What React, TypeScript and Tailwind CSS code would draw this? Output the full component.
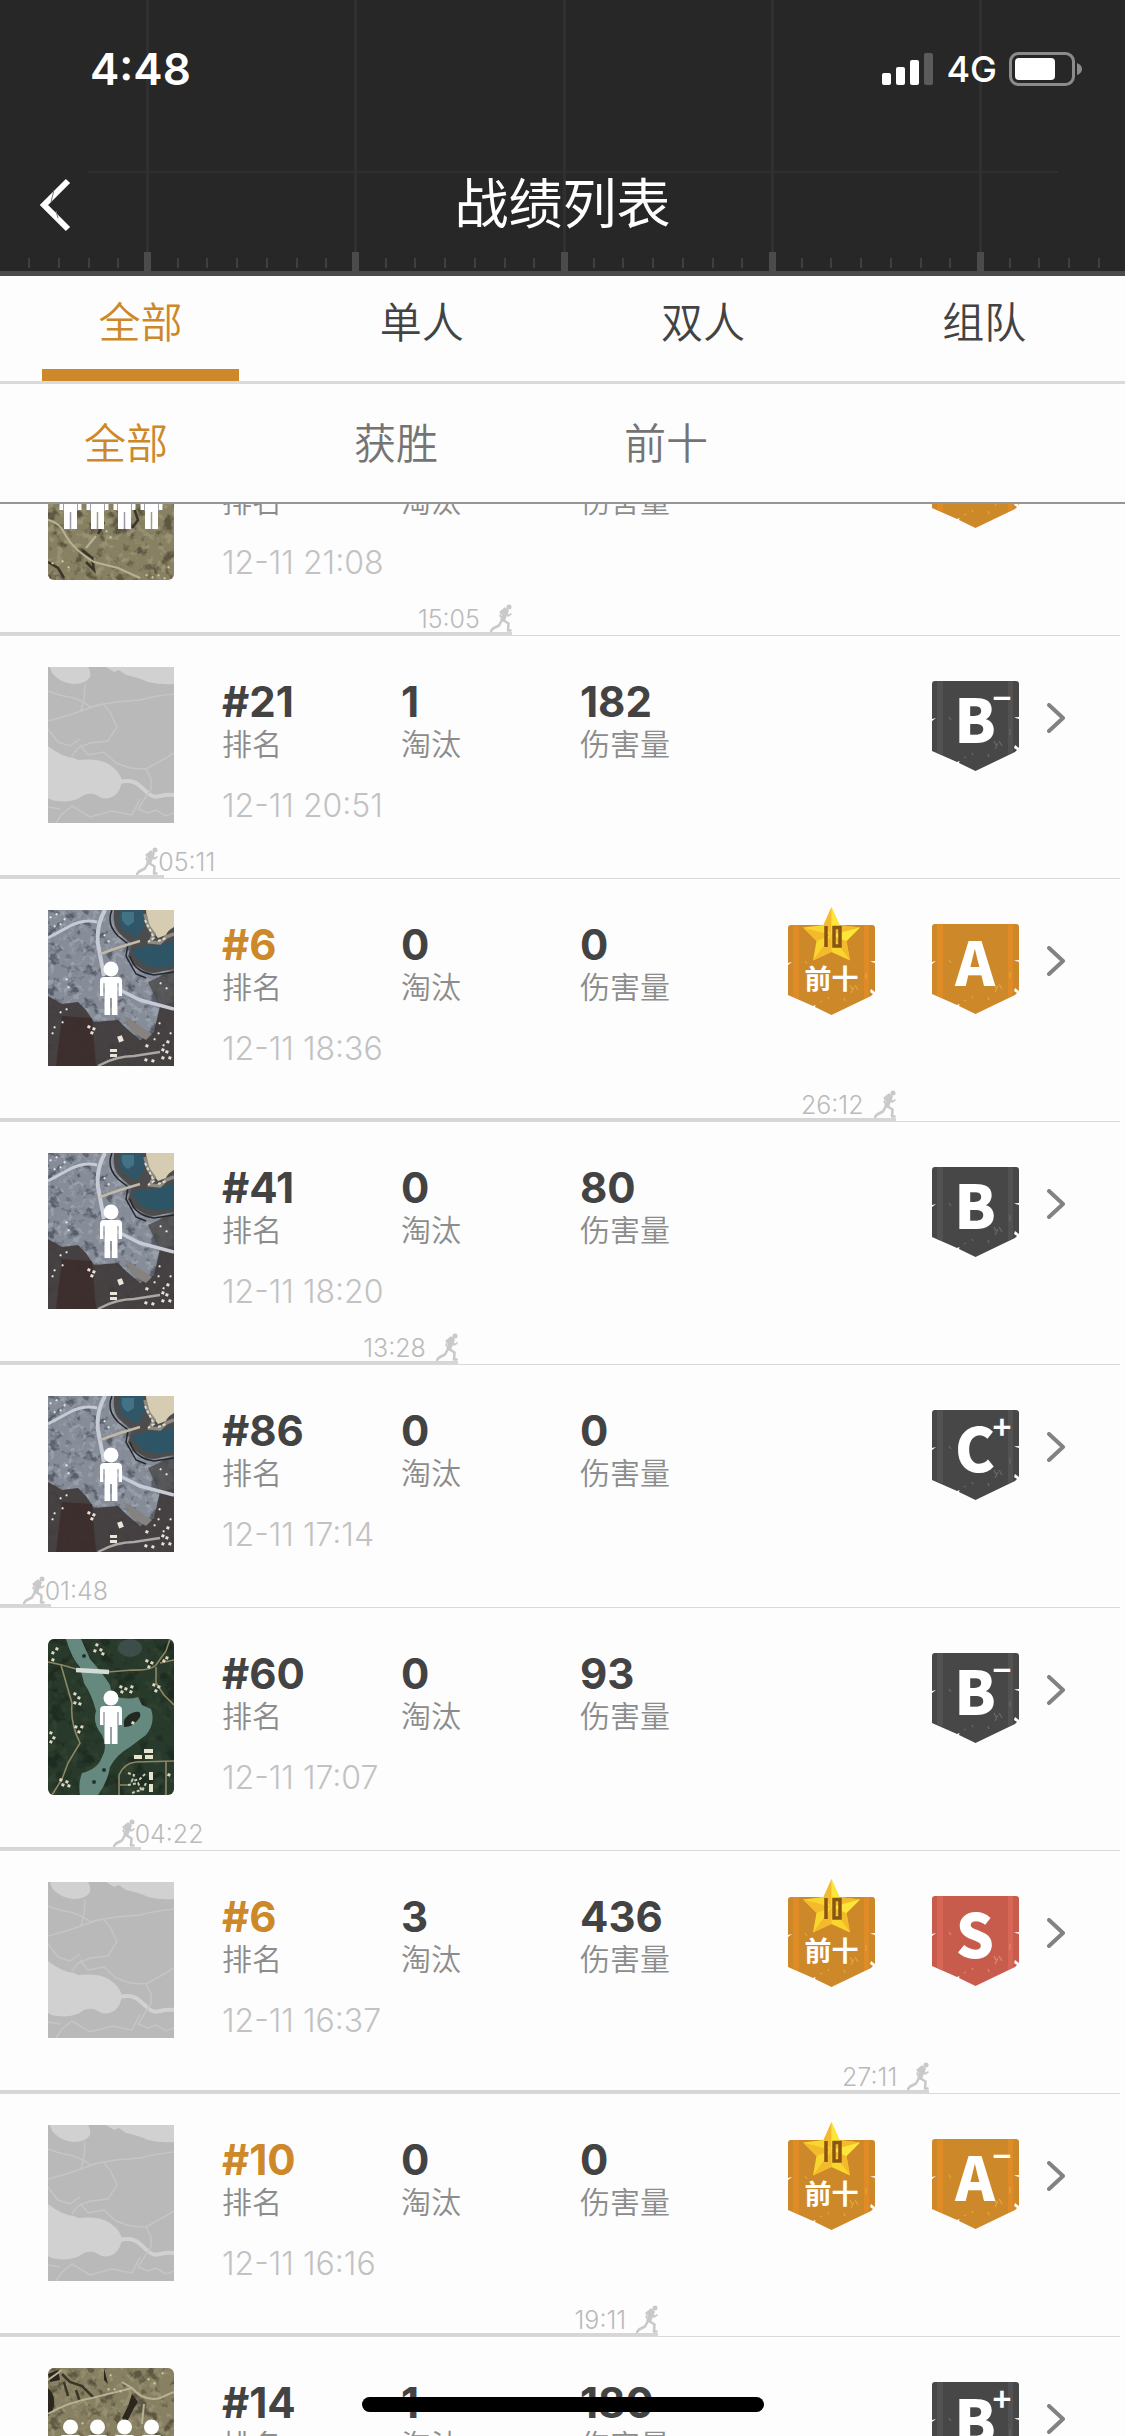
import React from "react";

type MapKind = "desert" | "grey" | "snow" | "green";
type Tone = "dark" | "gold" | "red";

interface Match {
  rank?: string;
  kills?: string;
  damage?: string;
  date: string;
  map: MapKind;
  grade?: string;
  sign?: "+" | "−";
  tone: Tone;
  topTen?: boolean;
  time?: string;
  /** survival progress, percent of the row width */
  progress?: number;
  /** the time sits behind the runner when the bar is short */
  timeAfter?: boolean;
}

const matches: Match[] = [
  { date: "12-11 21:08", map: "desert", tone: "gold", time: "15:05", progress: 45.5 },
  { rank: "#21", kills: "1", damage: "182", date: "12-11 20:51", map: "grey", grade: "B", sign: "−", tone: "dark", time: "05:11", progress: 14.6, timeAfter: true },
  { rank: "#6", kills: "0", damage: "0", date: "12-11 18:36", map: "snow", grade: "A", tone: "gold", topTen: true, time: "26:12", progress: 79.6 },
  { rank: "#41", kills: "0", damage: "80", date: "12-11 18:20", map: "snow", grade: "B", tone: "dark", time: "13:28", progress: 40.7 },
  { rank: "#86", kills: "0", damage: "0", date: "12-11 17:14", map: "snow", grade: "C", sign: "+", tone: "dark", time: "01:48", progress: 4.5, timeAfter: true },
  { rank: "#60", kills: "0", damage: "93", date: "12-11 17:07", map: "green", grade: "B", sign: "−", tone: "dark", time: "04:22", progress: 12.5, timeAfter: true },
  { rank: "#6", kills: "3", damage: "436", date: "12-11 16:37", map: "grey", grade: "S", tone: "red", topTen: true, time: "27:11", progress: 82.6 },
  { rank: "#10", kills: "0", damage: "0", date: "12-11 16:16", map: "grey", grade: "A", sign: "−", tone: "gold", topTen: true, time: "19:11", progress: 58.5 },
  { rank: "#14", kills: "1", damage: "180", date: "", map: "desert", grade: "B", sign: "+", tone: "dark" },
];

function HeaderBackdrop() {
  const majors = [147, 355, 564, 772, 980];
  const minors: number[] = [];
  for (let start = -61; start < 1125; start += 208) {
    for (let i = 1; i < 7; i++) minors.push(Math.round(start + i * 29.7));
  }
  return (
    <svg className="absolute inset-0 h-full w-full" viewBox="0 0 1125 276" preserveAspectRatio="none" aria-hidden="true">
      <rect width="1125" height="276" fill="#272727" />
      <rect x="88" y="171" width="970" height="2" fill="#2f2f2f" />
      {majors.map((x) => (
        <g key={x}>
          <rect x={x - 1} width="3" height="252" fill="#303030" />
          <rect x={x - 3} y="252" width="7" height="20" fill="#4b4b4b" />
        </g>
      ))}
      {minors.map((x) => (
        <rect key={x} x={x} y="258" width="2" height="10" fill="#3f3f3f" />
      ))}
      <rect y="271" width="1125" height="5" fill="#4a4a4a" />
    </svg>
  );
}

function Person({ x }: { x: number }) {
  return (
    <g transform={`translate(${x} 0)`} fill="#fff">
      <circle cx="0" cy="59" r="7.5" />
      <path d="M-7 67H7Q11 67 11 71V86H7.5V73H6.5V105H.7V88H-.7V105H-6.5V73H-7.5V86H-11V71Q-11 67-7 67Z" />
      <path d="M-7 74V87M7 74V87" stroke="#aab" strokeWidth="0.8" />
      <path d="M0 88V105" stroke="#99a" strokeWidth="1" />
    </g>
  );
}

function Grain({ id, freq, dark, light }: { id: string; freq: number; dark: string; light: string }) {
  return (
    <>
      <filter id={id + "d"} x="0" y="0" width="100%" height="100%">
        <feTurbulence type="fractalNoise" baseFrequency={freq} numOctaves="4" seed="7" />
        <feColorMatrix values="0 0 0 0 0  0 0 0 0 0  0 0 0 0 0  6 0 0 0 -3.2" result="n" />
        <feFlood floodColor={dark} />
        <feComposite in2="n" operator="in" />
      </filter>
      <filter id={id + "l"} x="0" y="0" width="100%" height="100%">
        <feTurbulence type="fractalNoise" baseFrequency={freq * 1.6} numOctaves="3" seed="21" />
        <feColorMatrix values="0 0 0 0 0  0 0 0 0 0  0 0 0 0 0  0 6 0 0 -3.2" result="n" />
        <feFlood floodColor={light} />
        <feComposite in2="n" operator="in" />
      </filter>
    </>
  );
}

function Dots({ points, size = 3, fill = "#ded8c4" }: { points: number[][]; size?: number; fill?: string }) {
  return (
    <g fill={fill}>
      {points.map(([x, y], i) => (
        <rect key={i} x={x} y={y} width={size} height={size} transform={`rotate(20 ${x} ${y})`} />
      ))}
    </g>
  );
}

function GreyMap() {
  return (
    <>
      <rect width="126" height="156" fill="#b9b9b9" />
      <g fill="#d1d1d1">
        <path d="M2 0H40Q43 5 42 10Q38 17 26 17Q12 16 4 6Z" />
        <path d="M58 0L66 5L71 3L78 8Q92 11 100 15Q112 18 126 17V0Z" />
        <path d="M0 79Q14 90 26 91L30 93Q52 91 62 98Q71 104 74 113Q73 124 66 129Q57 134 50 129Q44 125 36 128Q26 136 10 134Q4 134 0 131Z" />
      </g>
      <path d="M72 115Q84 112 92 119L101 127Q106 131 112 129Q120 127 126 128" fill="none" stroke="#d1d1d1" strokeWidth="4" />
      <g fill="none" stroke="#c5c5c5" strokeWidth="1.5">
        <path d="M0 24Q12 29 22 30Q36 34 42 40Q54 37 68 35L92 33Q106 29 126 27" />
        <path d="M37 17L36 32L33 44M56 38L62 45L69 60L65 66L60 74L42 76L30 81L24 89" />
        <path d="M0 54L18 49L30 45L50 38M0 62L10 75L22 79L32 72M32 78L40 88L56 85L68 96L82 101L98 102L116 92L126 86" />
        <path d="M98 102L103 112L103 122L90 142L100 146L108 143L118 149L126 146" />
        <path d="M8 156L14 147L24 139L42 150L64 144L84 148L92 132M0 140L12 142" />
      </g>
    </>
  );
}

function SnowMap({ id }: { id: string }) {
  return (
    <>
      <Grain id={id} freq={0.09} dark="#4a4f5a" light="#a9b1bc" />
      <rect width="126" height="156" fill="#868d98" />
      <rect width="126" height="156" filter={`url(#${id}d)`} opacity="0.75" />
      <rect width="126" height="156" filter={`url(#${id}l)`} opacity="0.55" />
      <path d="M0 86L14 94L30 92L38 100L46 112L70 110L78 118L92 130L106 122L112 96L126 92V156H0Z" fill="#403a39" opacity="0.92" />
      <path d="M100 72L126 60V96L112 98Z" fill="#4a4849" opacity="0.8" />
      <path d="M14 106L44 108L48 156H8Z" fill="#3c2b2a" opacity="0.8" />
      <path d="M76 106L86 112L104 124L98 130L84 122Z" fill="#85827f" />
      <path d="M66 0Q64 16 72 24L84 34L80 46Q88 60 106 63L126 59V0Z" fill="#4c4c4d" />
      <path d="M72 0Q68 14 78 22L90 28L97 14L95 0Z" fill="#315668" />
      <path d="M74 2Q72 12 80 16L86 12L86 2Z" fill="#447285" />
      <path d="M84 40Q90 54 104 57Q116 58 126 55V30L112 35L92 37Z" fill="#2d5566" />
      <path d="M98 0H126V17Q120 20 118 25L110 28L104 20L99 10Z" fill="#d6ccb1" />
      <path d="M97 4L100 16L106 24L102 32L112 33L118 27L126 24" fill="none" stroke="#8f8b80" strokeWidth="3.5" />
      <path d="M97 10L102 20L106 28L100 32M110 31L118 28" fill="none" stroke="#dedbce" strokeWidth="2" strokeDasharray="3 2" />
      <path d="M82 46Q86 62 106 65L126 62M64 0Q58 14 70 26L80 34L78 46L88 64L98 68" fill="none" stroke="#26272c" strokeWidth="1.5" />
      <g fill="none" stroke="#c6cbd6">
        <path d="M0 28L22 16Q36 9 49 12" strokeWidth="3" />
        <path d="M57 0Q48 16 50 34L56 66" strokeWidth="4" />
        <path d="M52 44L72 37L92 31" strokeWidth="2.5" stroke="#c3b9a8" />
        <path d="M68 78L92 90L126 99" strokeWidth="3.5" />
        <path d="M50 156Q68 146 86 146L112 142" strokeWidth="2.5" stroke="#aaa7a4" />
      </g>
      <Dots size={2} fill="#e6e6e1" points={[[2, 6], [8, 3], [12, 13], [6, 15], [16, 8], [56, 24], [60, 30], [18, 68], [20, 76], [12, 101], [18, 98], [6, 116], [4, 122], [14, 111], [111, 112], [110, 122], [106, 128], [115, 134], [118, 77], [112, 72], [122, 122]]} />
      <Dots fill="#e6e2d8" points={[[40, 115], [45, 117], [43, 121], [98, 134], [114, 138], [119, 130], [114, 146], [121, 146], [97, 148], [104, 149], [118, 140]]} />
      <g fill="#e8e5db">
        <rect x="70" y="126" width="5" height="6" transform="rotate(-20 72 129)" />
        <rect x="62" y="139" width="7" height="3" />
        <rect x="62" y="144" width="7" height="3" />
      </g>
      <Person x={63} />
    </>
  );
}

function GreenMap({ id }: { id: string }) {
  return (
    <>
      <Grain id={id} freq={0.06} dark="#17241b" light="#3c4a36" />
      <rect width="126" height="156" fill="#283a2b" />
      <rect width="126" height="156" filter={`url(#${id}d)`} opacity="0.6" />
      <rect width="126" height="156" filter={`url(#${id}l)`} opacity="0.45" />
      <ellipse cx="82" cy="9" rx="12" ry="9" fill="#46565a" opacity="0.7" />
      <path d="M18 0H33L42 20Q56 36 62 46L64 56Q78 62 90 58L94 66L103 70Q108 84 98 96L82 108Q68 116 62 128Q60 142 50 156H32Q30 144 34 134Q50 130 54 118Q60 108 54 96Q44 84 48 72Q44 56 36 44L32 28Q24 20 18 0Z" fill="#66897f" />
      <path d="M76 88Q74 78 84 74Q94 70 92 78Q86 88 76 88Z" fill="#20281f" />
      <g fill="#233430">
        <circle cx="36" cy="17" r="2" />
        <circle cx="56" cy="131" r="2" />
        <circle cx="46" cy="143" r="2" />
      </g>
      <g fill="none" stroke="#8f8764" strokeWidth="1.6">
        <path d="M0 23L14 26L28 30M60 33L84 31Q102 32 108 26L118 12L122 0" />
        <path d="M13 26Q18 44 24 64Q22 84 32 104L20 124L14 140L4 156" />
        <path d="M108 28V44L116 56L126 66M112 24L126 21" />
        <path d="M71 156V136Q76 124 88 123L126 122M118 123V156M72 146H80" />
      </g>
      <path d="M28 31L61 33" stroke="#d5dcd8" strokeWidth="4.5" />
      <Dots points={[[4, 12], [8, 8], [4, 19], [48, 4], [52, 9], [46, 10], [54, 13], [98, 20], [103, 22], [100, 26], [115, 20], [118, 17], [72, 46], [77, 48], [83, 46], [73, 51], [82, 51], [105, 44], [110, 46], [107, 50], [26, 53], [30, 57], [26, 62], [31, 63], [27, 86], [33, 86], [30, 91], [2, 92], [5, 97], [2, 101], [12, 139], [18, 141], [14, 144], [20, 145], [84, 82], [120, 134]]} />
      <g fill="#e6e3cf">
        <rect x="96" y="110" width="9" height="4" />
        <rect x="86" y="116" width="8" height="4" />
        <rect x="97" y="116" width="8" height="4" />
        <rect x="101" y="133" width="4" height="8" />
        <rect x="101" y="145" width="4" height="8" />
      </g>
      <path d="M80 134L86 136L84 142L92 140L98 134M80 146L90 144L94 152L98 144M84 154L96 150" fill="none" stroke="#c9cbb4" strokeWidth="2" strokeDasharray="3 2" />
      <Person x={63} />
    </>
  );
}

function DesertMap({ id }: { id: string }) {
  return (
    <>
      <Grain id={id} freq={0.08} dark="#4b4634" light="#a9a384" />
      <rect width="126" height="156" fill="#878062" />
      <rect width="126" height="156" filter={`url(#${id}d)`} opacity="0.7" />
      <rect width="126" height="156" filter={`url(#${id}l)`} opacity="0.5" />
      <path d="M0 6L10 2L12 12L2 14ZM0 20Q10 30 4 44L0 48ZM56 0L60 16L56 12ZM84 26L90 34L86 40L78 56L74 50L80 38Z" fill="#2b271f" />
      <path d="M14 6L22 14L34 18L46 30M16 14L20 28M28 22L32 34M56 98L50 110M86 84L90 96L84 104M34 126L44 134L46 146L38 138M0 138L10 144L16 154" fill="none" stroke="#3a3528" strokeWidth="2.5" />
      <g fill="none" stroke="#b8b193" strokeWidth="2">
        <path d="M0 46Q20 34 44 30L84 20Q96 34 112 30L126 24M84 20L74 14M0 12L14 2M96 36L94 56" />
        <path d="M0 96Q12 98 18 112Q26 126 46 138L70 144L92 154M38 124L48 112" />
      </g>
      <Dots fill="#cfc8a6" size={2} points={[[100, 10], [106, 14], [114, 4], [60, 20], [66, 20], [72, 22], [62, 6], [34, 54], [98, 150], [104, 152], [110, 150], [116, 153], [4, 138], [14, 136], [20, 142], [120, 142], [58, 106], [62, 112]]} />
      {[22.5, 49.5, 76.5, 103.5].map((x) => (
        <Person key={x} x={x} />
      ))}
    </>
  );
}

function MapThumb({ kind, id }: { kind: MapKind; id: string }) {
  const rounded = kind === "desert" || kind === "green";
  return (
    <svg className={rounded ? "h-[156px] w-[126px] shrink-0 rounded-md" : "h-[156px] w-[126px] shrink-0"} viewBox="0 0 126 156" aria-hidden="true">
      {kind === "grey" && <GreyMap />}
      {kind === "snow" && <SnowMap id={id} />}
      {kind === "green" && <GreenMap id={id} />}
      {kind === "desert" && <DesertMap id={id} />}
    </svg>
  );
}

const tones: Record<Tone, { base: string; stripe: string; scratch: string }> = {
  dark: { base: "#474747", stripe: "#555555", scratch: "#676767" },
  gold: { base: "#cd8829", stripe: "#e58d25", scratch: "#dfa63c" },
  red: { base: "#c85c4c", stripe: "#dc6a5a", scratch: "#dc8476" },
};

function ShieldBody({ tone }: { tone: Tone }) {
  const t = tones[tone];
  return (
    <>
      <path d="M3 0H84Q87 0 87 3V36L82 36.500L87 38V67L83 64L82 67L85 69L83 71L43.500 90L27 82L27.500 80L25 81L0 70V40L4 37L0 38V3Q0 0 3 0Z" fill={t.base} />
      <path d="M5 0H11V74L5 72ZM76 0H81V71L76 74Z" fill={t.stripe} opacity="0.75" />
      <path d="M17 36L19 39M63 68L66 62M67 60L70 65M62 60L64 64M56 73L57 76M78 48V54M40 72L41 74M32 77L34 76" stroke={t.scratch} strokeWidth="1.300" fill="none" />
    </>
  );
}

function Grade({ letter, sign, tone }: { letter?: string; sign?: string; tone: Tone }) {
  return (
    <svg className="h-[90px] w-[87px] shrink-0 font-['Noto_Sans_CJK_SC',sans-serif] font-black" viewBox="0 0 87 90">
      <ShieldBody tone={tone} />
      <text x="43" y="62" textAnchor="middle" fontSize="60" fill="#fff">{letter}</text>
      {sign && (
        <text x="70" y={29} textAnchor="middle" fontSize="32" fontWeight="700" fill="#fff">{sign}</text>
      )}
    </svg>
  );
}

function TopTen() {
  return (
    <svg className="h-[108px] w-[87px] shrink-0 font-['Noto_Sans_CJK_SC',sans-serif]" viewBox="0 0 87 108">
      <g transform="translate(0 18)">
        <ShieldBody tone="gold" />
      </g>
      <path d="M43.500 0L51.500 18L72 20.500L58.500 34L62 53.500L43.500 45L25 53.500L28.500 34L15 20.500L35.500 18Z" fill="#f8d62e" />
      <path d="M43.500 0L35.500 18L43.500 28ZM72 20.500L51.500 18L43.500 28ZM62 53.500L58.500 34L43.500 28ZM25 53.500L43.500 45V28ZM15 20.500L28.500 34L43.500 28Z" fill="#f1b02c" opacity="0.75" />
      <path d="M43.500 0L51.500 18L43.500 28ZM58.500 34L72 20.500L43.500 28Z" fill="#ffe83c" opacity="0.8" />
      <path d="M38 19V40M46 20.500H52V39H46Z" fill="none" stroke="#8a5514" strokeWidth="3.500" />
      <text x="43.500" y="82" textAnchor="middle" fontSize="27" fontWeight="700" fill="#fff">前十</text>
    </svg>
  );
}

function Runner() {
  return (
    <svg className="h-7 w-[22px] shrink-0" viewBox="0 0 22 28" fill="none" stroke="#c9c9c9" strokeLinecap="round" strokeLinejoin="round" aria-hidden="true">
      <circle cx="19" cy="3" r="2.500" fill="#c9c9c9" stroke="none" />
      <path d="M10 8L15 4L18 7L14 11Z" fill="#c9c9c9" strokeWidth="1.500" />
      <path d="M16 7L13 15" strokeWidth="5" />
      <path d="M17 8L18 12L21 10M12 8L10 12L12 14" strokeWidth="1.600" />
      <path d="M13 16L18.500 19.500L18 26.500H20.500" strokeWidth="2.600" />
      <path d="M12 16L9 21.500L3 24.500L1 27" strokeWidth="2.600" />
    </svg>
  );
}

function Stat({ value, label, highlight }: { value?: string; label: string; highlight?: boolean }) {
  return (
    <div className="flex flex-col-reverse justify-end">
      <dt className="text-[30px] leading-[36px] font-[350] text-[#8c8c8c]">{label}</dt>
      <dd className={highlight ? "h-12 text-[42px] leading-[48px] font-bold text-[#cd8829]" : "h-12 text-[42px] leading-[48px] font-bold text-[#434343]"}>{value}</dd>
    </div>
  );
}

function MatchRow({ match, index }: { match: Match; index: number }) {
  return (
    <li className="relative h-[243px] shrink-0">
      <a href="#match" className="flex h-full items-start pl-12 pr-[60px]">
        <span className="mt-[31px] flex">
          <MapThumb kind={match.map} id={"map" + index} />
        </span>
        <div className="ml-12 flex-1 pt-[42px]">
          <dl className="grid grid-cols-[179px_179px_179px]">
            <Stat value={match.rank} label="排名" highlight={match.topTen} />
            <Stat value={match.kills} label="淘汰" />
            <Stat value={match.damage} label="伤害量" />
          </dl>
          <time className="mt-6 block text-[32px] leading-10 font-light text-[#c2c2c2]">{match.date}</time>
        </div>
        {match.topTen && (
          <span className="mt-[28px] mr-[57px] flex">
            <TopTen />
          </span>
        )}
        <span className="mt-[45px] flex">
          <Grade letter={match.grade} sign={match.sign} tone={match.tone} />
        </span>
        <svg className="mt-[67px] ml-7 h-[30px] w-[18px] shrink-0" viewBox="0 0 18 30" fill="none" stroke="#828282" strokeWidth="4" strokeLinecap="round" strokeLinejoin="round" aria-hidden="true">
          <path d="M2 2L16 15L2 28" />
        </svg>
      </a>
      <div className="absolute bottom-0 left-0 right-[5px] h-px bg-[#d9d9d9]" />
      {match.time && (
        <div className="absolute bottom-px left-0 flex h-[30px] items-end justify-end border-b-[3px] border-[#d6d6d6]" style={{ width: `${match.progress}%` }}>
          {!match.timeAfter && <span className="mr-2.5 text-[25px] leading-[26px] font-light text-[#bababa]">{match.time}</span>}
          <span className={match.timeAfter ? "relative mr-1.5 flex" : "flex"}>
            <Runner />
            {match.timeAfter && <span className="absolute bottom-0 left-full text-[25px] leading-[26px] font-light text-[#bababa]">{match.time}</span>}
          </span>
        </div>
      )}
    </li>
  );
}

export default function App() {
  return (
    <div className="relative flex h-screen flex-col overflow-hidden bg-[#fdfdfd] font-[Inter,'Noto_Sans_CJK_SC',sans-serif]">
      <header className="relative h-[276px] shrink-0 text-white">
        <HeaderBackdrop />
        <div className="relative flex h-[138px] items-center justify-between pl-[90px] pr-[42px]">
          <time className="text-[44px] font-semibold">4:48</time>
          <div className="flex items-center">
            <svg className="h-8 w-[52px]" viewBox="0 0 52 32" fill="#fff" aria-hidden="true">
              <rect y="20" width="9" height="12" rx="2" />
              <rect x="14" y="14" width="9" height="18" rx="2" />
              <rect x="28" y="7" width="9" height="25" rx="2" />
              <rect x="42" width="9" height="32" rx="2" fill="#5b5b5b" />
            </svg>
            <span className="ml-3 text-[36px] font-medium">4G</span>
            <svg className="ml-3 h-[34px] w-[74px]" viewBox="0 0 74 34" aria-hidden="true">
              <rect x="1.500" y="1.500" width="63" height="31" rx="8" fill="none" stroke="#8b8b8b" strokeWidth="3" />
              <rect x="6" y="6" width="40" height="22" rx="4" fill="#fff" />
              <path d="M68 11Q73 13 73 17Q73 21 68 23Z" fill="#8b8b8b" />
            </svg>
          </div>
        </div>
        <div className="relative flex h-[134px] items-center justify-center">
          <button type="button" aria-label="返回" className="absolute left-[39px] flex">
            <svg className="h-[54px] w-8" viewBox="0 0 32 54" fill="none" stroke="#fff" strokeWidth="6" aria-hidden="true">
              <path d="M29 3L5 27L29 51" />
              <path d="M15 12L12 24M17 33L19 40" stroke="#777" strokeWidth="1" />
            </svg>
          </button>
          <h1 className="text-[54px] leading-[66px] font-normal">战绩列表</h1>
        </div>
      </header>

      <nav className="grid h-[108px] shrink-0 grid-cols-4 border-b-[3px] border-[#dadada] text-[42px] text-[#434343]" aria-label="模式">
        {["全部", "单人", "双人", "组队"].map((tab, i) => (
          <button key={tab} type="button" className={i === 0 ? "flex flex-col items-center text-[#cd8829]" : "flex flex-col items-center"}>
            <span className="flex flex-1 items-center font-[350]">{tab}</span>
            <span className={i === 0 ? "h-3 w-[70%] bg-[#cd8829]" : "h-3 w-[70%]"} />
          </button>
        ))}
      </nav>

      <nav className="flex h-[120px] shrink-0 items-center gap-[186px] border-b-2 border-[#969696] pl-[84px] text-[42px] font-[350] text-[#747474]" aria-label="筛选">
        <button type="button" className="text-[#cd8829]">全部</button>
        <button type="button">获胜</button>
        <button type="button">前十</button>
      </nav>

      <main className="min-h-0 flex-1 overflow-hidden">
        <ul className="-mt-[111px] flex flex-col">
          {matches.map((match, i) => (
            <MatchRow key={i} match={match} index={i} />
          ))}
        </ul>
      </main>

      <div className="absolute bottom-6 left-1/2 h-[15px] w-[402px] -translate-x-1/2 rounded-full bg-black" />
    </div>
  );
}
